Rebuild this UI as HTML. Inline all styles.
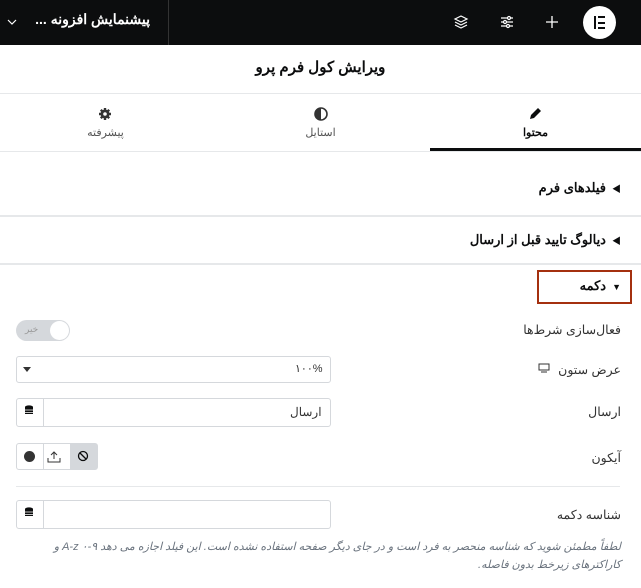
<!DOCTYPE html>
<html><head><meta charset="utf-8"><style>
*{box-sizing:border-box;margin:0;padding:0}
body{width:641px;height:588px;overflow:hidden;background:#fff;font-family:"Liberation Sans","Noto Sans CJK SC",sans-serif;color:#0c0d0e;position:relative}
.a{position:absolute}
.rt{direction:rtl;text-align:right}
.lbl{font-size:12.5px;color:#333;right:20px}
.inp{border:1px solid #d5d8dc;border-radius:3px;background:#fff}
.tri{font-size:9px;margin-left:6px}
</style></head><body>
<div class="a" style="left:0;top:0;width:641px;height:45px;background:#0c0d0e"></div>
<div class="a" style="left:168px;top:0;width:1px;height:45px;background:#333"></div>
<div class="a rt" style="left:30px;top:11px;width:120px;color:#fff;font-size:14px;font-weight:bold">پیشنمایش افزونه ...</div>
<svg class="a" style="left:7px;top:17px" width="10" height="10" viewBox="0 0 10 10"><path d="M1 3l4 4 4-4" stroke="#fff" fill="none" stroke-width="1.2"/></svg>
<div class="a" style="left:583px;top:6px;width:33px;height:33px;border-radius:50%;background:#fff"></div>
<div class="a" style="left:594px;top:16px;width:2px;height:13px;background:#0c0d0e"></div>
<div class="a" style="left:598px;top:16px;width:7px;height:2px;background:#0c0d0e"></div>
<div class="a" style="left:598px;top:21.5px;width:7px;height:2px;background:#0c0d0e"></div>
<div class="a" style="left:598px;top:27px;width:7px;height:2px;background:#0c0d0e"></div>
<svg class="a" style="left:544px;top:14px" width="16" height="16"><path d="M8 2v12M2 8h12" stroke="#fff" stroke-width="1.3"/></svg>
<svg class="a" style="left:499px;top:14px" width="16" height="16" fill="none" stroke="#fff" stroke-width="1.2"><path d="M2 4h12M2 8h12M2 12h12"/><circle cx="10" cy="4" r="1.5" fill="#0c0d0e"/><circle cx="6" cy="8" r="1.5" fill="#0c0d0e"/><circle cx="9" cy="12" r="1.5" fill="#0c0d0e"/></svg>
<svg class="a" style="left:453px;top:14px" width="16" height="16" fill="none" stroke="#fff" stroke-width="1.2"><path d="M8 2l6 3-6 3-6-3z"/><path d="M2 8l6 3 6-3M2 11l6 3 6-3"/></svg>

<div class="a" style="left:0;top:58px;width:641px;text-align:center;font-size:15px;font-weight:bold">ویرایش کول فرم پرو</div>
<div class="a" style="left:0;top:93px;width:641px;height:1px;background:#e6e8ea"></div>
<svg class="a" style="left:528px;top:107px" width="14" height="14"><path d="M2 12l1-4 7-7 3 3-7 7z" fill="#0c0d0e"/></svg>
<div class="a" style="left:430px;top:126px;width:211px;text-align:center;font-size:11px;font-weight:bold">محتوا</div>
<div class="a" style="left:430px;top:148px;width:211px;height:3px;background:#0c0d0e"></div>
<svg class="a" style="left:314px;top:107px" width="14" height="14"><circle cx="7" cy="7" r="6" fill="none" stroke="#333" stroke-width="1.6"/><path d="M7 1a6 6 0 0 0 0 12z" fill="#333"/></svg>
<div class="a" style="left:215px;top:126px;width:211px;text-align:center;font-size:11px;color:#555">استایل</div>
<svg class="a" style="left:98px;top:107px" width="14" height="14"><circle cx="7" cy="7" r="4.5" fill="#333"/><path d="M7 1v12M1 7h12M2.8 2.8l8.4 8.4M11.2 2.8l-8.4 8.4" stroke="#333" stroke-width="2.4"/><circle cx="7" cy="7" r="1.8" fill="#fff"/></svg>
<div class="a" style="left:0;top:126px;width:211px;text-align:center;font-size:11px;color:#555">پیشرفته</div>
<div class="a" style="left:0;top:151px;width:641px;height:1px;background:#e6e8ea"></div>

<div class="a rt" style="right:20px;top:180px;font-size:13px;font-weight:bold"><span class="tri">◀</span>فیلدهای فرم</div>
<div class="a" style="left:0;top:215px;width:641px;height:2px;background:#e6e8ea"></div>
<div class="a rt" style="right:20px;top:232px;font-size:13px;font-weight:bold"><span class="tri">◀</span>دیالوگ تایید قبل از ارسال</div>
<div class="a" style="left:0;top:263px;width:641px;height:2px;background:#e6e8ea"></div>
<div class="a" style="left:537px;top:270px;width:95px;height:34px;border:2px solid #a4300f"></div>
<div class="a rt" style="right:20px;top:278px;font-size:13px;font-weight:bold"><span class="tri">▼</span>دکمه</div>

<div class="a rt lbl" style="top:322px">فعال‌سازی شرط‌ها</div>
<div class="a" style="left:16px;top:320px;width:54px;height:21px;border-radius:11px;background:#d5d8dc"></div>
<div class="a" style="left:50px;top:321px;width:19px;height:19px;border-radius:50%;background:#fff"></div>
<div class="a" style="left:25px;top:324px;font-size:9px;color:#999">خیر</div>

<div class="a rt lbl" style="top:362px">عرض ستون</div>
<svg class="a" style="left:538px;top:363px" width="12" height="11"><rect x="1" y="1" width="10" height="6" fill="none" stroke="#333"/><path d="M3 9h6" stroke="#333"/></svg>
<div class="a inp" style="left:16px;top:356px;width:315px;height:27px"></div>
<svg class="a" style="left:23px;top:367px" width="8" height="5"><path d="M0 0h8L4 5z" fill="#333"/></svg>
<div class="a" style="left:295px;top:362px;font-size:11px;color:#333">۱۰۰%</div>

<div class="a rt lbl" style="top:404px">ارسال</div>
<div class="a inp" style="left:16px;top:398px;width:315px;height:29px"></div>
<div class="a" style="left:43px;top:398px;width:1px;height:29px;background:#d5d8dc"></div>
<svg class="a" style="left:24px;top:405px" width="10" height="11"><ellipse cx="5" cy="2" rx="4" ry="1.6" fill="#0c0d0e"/><rect x="1" y="2" width="8" height="7" fill="#0c0d0e"/><path d="M1 5h8M1 7.5h8" stroke="#fff" stroke-width=".8"/></svg>
<div class="a" style="left:290px;top:405px;font-size:12px;color:#333">ارسال</div>

<div class="a rt lbl" style="top:450px">آیکون</div>
<div class="a inp" style="left:16px;top:443px;width:82px;height:27px;overflow:hidden"></div>
<div class="a" style="left:70px;top:444px;width:27px;height:25px;background:#d5d8dc"></div>
<div class="a" style="left:43px;top:444px;width:1px;height:25px;background:#d5d8dc"></div>
<div class="a" style="left:24px;top:451px;width:11px;height:11px;border-radius:50%;background:#333"></div>
<svg class="a" style="left:47px;top:449px" width="14" height="14" fill="none" stroke="#333"><path d="M1 9v4h12V9M7 10V3M4 6l3-3 3 3"/></svg>
<svg class="a" style="left:77px;top:450px" width="12" height="12" fill="none" stroke="#0c0d0e" stroke-width="1.3"><circle cx="6" cy="6" r="4.5"/><path d="M3 3l6 6"/></svg>

<div class="a" style="left:16px;top:486px;width:604px;height:1px;background:#e6e8ea"></div>
<div class="a rt lbl" style="top:507px">شناسه دکمه</div>
<div class="a inp" style="left:16px;top:500px;width:315px;height:29px"></div>
<div class="a" style="left:43px;top:500px;width:1px;height:29px;background:#d5d8dc"></div>
<svg class="a" style="left:24px;top:507px" width="10" height="11"><ellipse cx="5" cy="2" rx="4" ry="1.6" fill="#0c0d0e"/><rect x="1" y="2" width="8" height="7" fill="#0c0d0e"/><path d="M1 5h8M1 7.5h8" stroke="#fff" stroke-width=".8"/></svg>
<div class="a rt" style="left:20px;right:20px;top:538px;font-size:11px;font-style:italic;color:#69727d;line-height:18px">لطفاً مطمئن شوید که شناسه منحصر به فرد است و در جای دیگر صفحه استفاده نشده است. این فیلد اجازه می دهد <span dir="ltr">A-z ۰-۹</span> و کاراکترهای زیرخط بدون فاصله.</div>
</body></html>
